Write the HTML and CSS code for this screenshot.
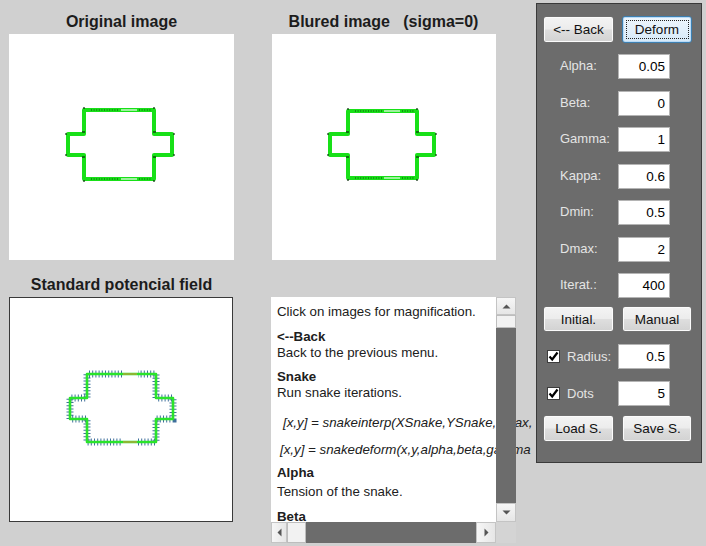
FILE: index.html
```html
<!DOCTYPE html>
<html>
<head>
<meta charset="utf-8">
<link rel="stylesheet" href="styles.css">
</head>
<body>
<div class="app">
  <div class="figs">
    <div class="title">Original image</div>
    <div class="title">Blured image   (sigma=0)</div>
    <div class="img">
      <svg width="225" height="226" viewBox="0 0 225 226">
        <path d="M75,76H145V100H163V121H145V145H75V121H59V100H75Z" fill="none" stroke="#18e018" stroke-width="4" stroke-linejoin="round"/>
        <path d="M82,76H110M130,76H143M82,145H110M130,145H143" stroke="#0b3d0b" stroke-width="1.3" stroke-dasharray="1 1.6" opacity=".65"/>
        <path d="M112,76H128M112,145H128" stroke="#c8f8c8" stroke-width="1.4"/>
        <path d="M73,98h3M144,98h3M73,123h3M144,123h3M57,99v2M165,99v2M57,120v2M165,120v2M74,74h2M144,74h2M74,147h2M144,147h2" stroke="#0b2d0b" stroke-width="1.4" opacity=".8"/>
      </svg>
    </div>
    <div class="img img2">
      <svg width="224" height="226" viewBox="0 0 224 226">
        <path d="M76,77H145V100H162V121H145V144H76V121H58V100H76Z" fill="none" stroke="#18e018" stroke-width="4" stroke-linejoin="round"/>
        <path d="M83,77H110M130,77H143M83,144H110M130,144H143" stroke="#0b3d0b" stroke-width="1.3" stroke-dasharray="1 1.6" opacity=".65"/>
        <path d="M112,77H128M112,144H128" stroke="#c8f8c8" stroke-width="1.4"/>
        <path d="M74,98h3M144,98h3M74,123h3M144,123h3M56,99v2M164,99v2M56,120v2M164,120v2M75,75h2M144,75h2M75,146h2M144,146h2" stroke="#0b2d0b" stroke-width="1.4" opacity=".8"/>
      </svg>
    </div>
    <div class="title t2">Standard potencial field</div>
    <div class="title t2"></div>
    <div class="img img3">
      <svg width="222" height="223" viewBox="0 0 222 223">
        <path d="M112,76H77V100H60V121H77V144H112M128,144H146V121H163V100H146V76H128" fill="none" stroke="#3f6f9c" stroke-width="7" stroke-dasharray="1 2.2"/>
        <path d="M77,76H146V100H163V121H146V144H77V121H60V100H77Z" fill="none" stroke="#2ae42a" stroke-width="2.6" stroke-linejoin="round"/>
        <path d="M113,76H127M113,144H127" stroke="#b0a838" stroke-width="1.4"/>
      </svg>
    </div>
    <div class="help">
      <div class="help-body">
        <p>Click on images for magnification.</p>
        <p class="h s1">&lt;--Back</p>
        <p>Back to the previous menu.</p>
        <p class="h s2">Snake</p>
        <p>Run snake iterations.</p>
        <p class="f f1">[x,y] = snakeinterp(XSnake,YSnake,dmax,</p>
        <p class="f f2">[x,y] = snakedeform(x,y,alpha,beta,gamma</p>
        <p class="h s3">Alpha</p>
        <p class="b3">Tension of the snake.</p>
        <p class="h s4">Beta</p>
      </div>
      <div class="vscroll">
        <div class="sbtn sbtn-up"><svg width="9" height="5" viewBox="0 0 9 5"><path d="M0.5,4.5L4.5,0.5L8.5,4.5Z" fill="#555"/></svg></div>
        <div class="vthumb"></div>
        <div class="vtrack"></div>
        <div class="sbtn sbtn-down"><svg width="9" height="5" viewBox="0 0 9 5"><path d="M0.5,0.5L4.5,4.5L8.5,0.5Z" fill="#555"/></svg></div>
      </div>
      <div class="hscroll">
        <div class="hbtn hbtn-l"><svg width="5" height="9" viewBox="0 0 5 9"><path d="M4.5,0.5L0.5,4.5L4.5,8.5Z" fill="#555"/></svg></div>
        <div class="hthumb"></div>
        <div class="htrack"></div>
        <div class="hbtn hbtn-r"><svg width="5" height="9" viewBox="0 0 5 9"><path d="M0.5,0.5L4.5,4.5L0.5,8.5Z" fill="#555"/></svg></div>
      </div>
      <div class="corner"></div>
    </div>
  </div>

  <div class="panel">
    <div class="btnrow">
      <div class="btn">&lt;-- Back</div>
      <div class="btn btn-focus"><span class="focus">Deform</span></div>
    </div>
    <div class="fields">
      <div class="lbl">Alpha:</div><div class="val">0.05</div>
      <div class="lbl">Beta:</div><div class="val">0</div>
      <div class="lbl">Gamma:</div><div class="val">1</div>
      <div class="lbl">Kappa:</div><div class="val">0.6</div>
      <div class="lbl">Dmin:</div><div class="val">0.5</div>
      <div class="lbl">Dmax:</div><div class="val">2</div>
      <div class="lbl">Iterat.:</div><div class="val">400</div>
    </div>
    <div class="btnrow r2">
      <div class="btn">Initial.</div>
      <div class="btn">Manual</div>
    </div>
    <div class="fields fields2">
      <div class="lbl chkl"><span class="chk"><svg width="11" height="11" viewBox="0 0 11 11"><path d="M1.5,5.5L4.2,8.5L9.5,1.5" fill="none" stroke="#000" stroke-width="2.2"/></svg></span>Radius:</div><div class="val">0.5</div>
      <div class="lbl chkl"><span class="chk"><svg width="11" height="11" viewBox="0 0 11 11"><path d="M1.5,5.5L4.2,8.5L9.5,1.5" fill="none" stroke="#000" stroke-width="2.2"/></svg></span>Dots</div><div class="val">5</div>
    </div>
    <div class="btnrow r3">
      <div class="btn">Load S.</div>
      <div class="btn">Save S.</div>
    </div>
  </div>
</div>
</body>
</html>
```

FILE: styles.css
```css
* { box-sizing: border-box; margin: 0; padding: 0; }
html, body { width: 706px; height: 546px; overflow: hidden; }
body {
  background: #d0d0d0;
  font-family: "Liberation Sans", Arial, sans-serif;
  color: #1a1a1a;
}
.app { display: flex; align-items: flex-start; }

.figs {
  width: 536px;
  height: 546px;
  overflow: hidden;
  padding-left: 9px;
  display: grid;
  grid-template-columns: 225px 225px;
  grid-template-rows: 34px 226px 37px 246px;
  column-gap: 37px;
}
.title {
  font-weight: bold;
  font-size: 16px;
  line-height: 18px;
  padding-top: 13px;
  text-align: center;
  white-space: pre;
  color: #1c1c1c;
}
.title.t2 { padding-top: 16px; }

.img { background: #fff; width: 225px; height: 226px; }
.img svg { display: block; }
.img2 { width: 224px; margin-left: 1px; }
.img3 { width: 224px; height: 225px; border: 1px solid #3a3a3a; }

.help {
  position: relative;
  width: 245px;
  height: 246px;
  background: #fff;
}
.help-body {
  padding: 7px 0 0 6px;
  font-size: 13.3px;
  line-height: 16px;
  white-space: nowrap;
  color: #202020;
}
.help-body .h { font-weight: bold; }
.s1 { margin-top: 9px; }
.s2 { margin-top: 8px; }
.f { font-style: italic; font-size: 13.3px; }
.f1 { margin-top: 14px; padding-left: 6px; }
.f2 { margin-top: 11px; padding-left: 3px; }
.s3 { margin-top: 7px; }
.b3 { margin-top: 3px; }
.s4 { margin-top: 9px; }

.vscroll {
  position: absolute;
  right: 0;
  top: 0;
  width: 20px;
  height: 225px;
  display: flex;
  flex-direction: column;
  background: #6c6c6c;
}
.sbtn {
  height: 18px;
  background: linear-gradient(#f6f6f6, #e6e6e6);
  border: 1px solid #c4c4c4;
  display: flex;
  align-items: center;
  justify-content: center;
}
.sbtn-down { height: 19px; }
.vthumb { height: 13px; background: #f2f2f2; border: 1px solid #bdbdbd; }
.vtrack { flex: 1; }

.hscroll {
  position: absolute;
  left: 0;
  bottom: 0;
  width: 225px;
  height: 21px;
  display: flex;
  background: #6c6c6c;
}
.hbtn {
  width: 16px;
  background: linear-gradient(90deg, #f6f6f6, #e6e6e6);
  border: 1px solid #c4c4c4;
  display: flex;
  align-items: center;
  justify-content: center;
}
.hbtn-r { width: 20px; }
.hthumb { width: 19px; background: #f2f2f2; border: 1px solid #bdbdbd; }
.htrack { flex: 1; }
.corner {
  position: absolute;
  right: 0;
  bottom: 0;
  width: 20px;
  height: 21px;
  background: #d4d4d4;
}

.panel {
  width: 166px;
  height: 460px;
  margin-top: 3px;
  background: #6c6c6c;
  border: 1px solid #3a3a3a;
  padding: 12px 0 0 6px;
}
.btnrow { display: flex; gap: 8px; }
.btn {
  width: 71px;
  height: 27px;
  border: 1px solid #707070;
  border-radius: 3px;
  background: linear-gradient(#f4f4f4 0%, #ececec 48%, #dedede 52%, #d2d2d2 100%);
  box-shadow: inset 0 0 0 1px #fbfbfb;
  font-size: 13.5px;
  color: #111;
  display: flex;
  align-items: center;
  justify-content: center;
}
.btn + .btn { width: 70px; }
.btn-focus {
  border-color: #3c7fb1;
  background: linear-gradient(#eef6fd 0%, #e3f0fb 50%, #d6e9f8 100%);
  box-shadow: inset 0 0 0 1px #b9dbf7;
}
.focus {
  display: flex;
  align-items: center;
  justify-content: center;
  width: 63px;
  height: 19px;
  border: 1px dotted #222;
}
.r2 { margin-top: 8px; }
.r2 .btn { height: 26px; }
.r3 { margin-top: 9px; }

.fields {
  margin-top: 11px;
  display: grid;
  grid-template-columns: 75px 52px;
  row-gap: 11.5px;
}
.fields2 { margin-top: 12px; row-gap: 12px; }
.lbl {
  height: 25px;
  padding-left: 17px;
  padding-bottom: 2px;
  display: flex;
  align-items: center;
  font-size: 13px;
  color: #e4e4e4;
}
.chkl { padding-left: 4px; padding-bottom: 0; gap: 7px; }
.chk {
  width: 13px;
  height: 13px;
  background: #fff;
  border: 1px solid #3c3c3c;
  display: flex;
  align-items: center;
  justify-content: center;
}
.chk svg { display: block; }
.val {
  height: 25px;
  background: #fff;
  border: 1px solid #b4b4b4;
  text-align: right;
  padding-right: 4px;
  font-size: 13.5px;
  line-height: 23px;
  color: #000;
}
```
